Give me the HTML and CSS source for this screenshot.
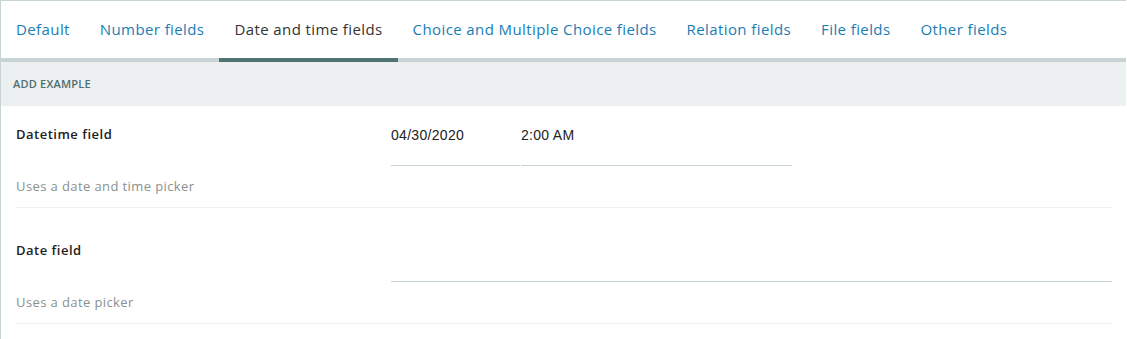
FILE: index.html
```html
<!DOCTYPE html>
<html lang="en">
<head>
    <meta charset="UTF-8">
    <meta name="viewport" content="width=device-width, initial-scale=1.0">
    <title>Date and time fields</title>
    <link rel="stylesheet" href="styles.css">
</head>
<body>
    <div class="panel">
        <ul class="tabs">
            <li><a href="#">Default</a></li>
            <li><a href="#">Number fields</a></li>
            <li class="active"><a href="#">Date and time fields</a></li>
            <li><a href="#">Choice and Multiple Choice fields</a></li>
            <li><a href="#">Relation fields</a></li>
            <li><a href="#">File fields</a></li>
            <li><a href="#">Other fields</a></li>
        </ul>
        <div class="section-title">ADD EXAMPLE</div>
        <div class="form-row">
            <div class="field-info">
                <div class="field-label">Datetime field</div>
                <div class="field-help">Uses a date and time picker</div>
            </div>
            <div class="field-input">
                <input type="text" class="date-input" value="04/30/2020">
                <input type="text" class="time-input" value="2:00 AM">
            </div>
        </div>
        <div class="form-row">
            <div class="field-info">
                <div class="field-label">Date field</div>
                <div class="field-help">Uses a date picker</div>
            </div>
            <div class="field-input">
                <input type="text" class="full-input" value="">
            </div>
        </div>
    </div>
</body>
</html>
```

FILE: styles.css
```css
body {
    margin: 0;
    padding: 0;
    font-family: "Open Sans", sans-serif;
    background-color: #fff;
}
.panel {
    width: 1126px;
    height: 339px;
    border-top: 1px solid #c8d3d6;
    border-left: 1px solid #c8d3d6;
    box-sizing: border-box;
}
.tabs {
    list-style: none;
    margin: 0;
    padding: 0;
    display: flex;
    height: 57px;
    border-bottom: 4px solid #c8d3d6;
}
.tabs li {
    margin-bottom: -4px;
    border-bottom: 4px solid transparent;
}
.tabs li a {
    display: block;
    padding: 18px 15px 0;
    height: 39px;
    font-size: 15px;
    letter-spacing: 0.4px;
    color: #1a7db5;
    text-decoration: none;
}
.tabs li.active {
    border-bottom-color: #507474;
}
.tabs li.active a {
    color: #333;
}
.section-title {
    background-color: #ecf0f1;
    height: 44px;
    line-height: 44px;
    padding-left: 12px;
    font-size: 11px;
    font-weight: 600;
    letter-spacing: 0.2px;
    color: #4f6e6e;
}
.form-row {
    display: flex;
    margin: 0 14px 0 15px;
    border-bottom: 1px solid #ecf0f1;
}
.form-row + .form-row {
    padding-top: 14px;
}
.field-info {
    width: 375px;
}
.field-label {
    padding-top: 18px;
    line-height: 20px;
    font-size: 13px;
    font-weight: 600;
    letter-spacing: 0.5px;
    color: #222;
}
.field-help {
    padding: 32px 0 11px;
    line-height: 20px;
    font-size: 13px;
    letter-spacing: 0.4px;
    color: #8a9090;
}
.field-input {
    flex: 1;
    display: flex;
    align-items: flex-start;
    padding-top: 18px;
}
.field-input input {
    box-sizing: border-box;
    border: none;
    border-bottom: 1px solid #c6d6d8;
    font-family: "Liberation Sans", Arial, sans-serif;
    font-size: 14px;
    letter-spacing: 0.3px;
    color: #222;
    padding: 0 0 19px;
    height: 42px;
    line-height: 22px;
    outline: none;
}
.date-input {
    width: 129px;
    margin-right: 1px;
}
.time-input {
    width: 271px;
}
.full-input {
    width: 100%;
}
```
